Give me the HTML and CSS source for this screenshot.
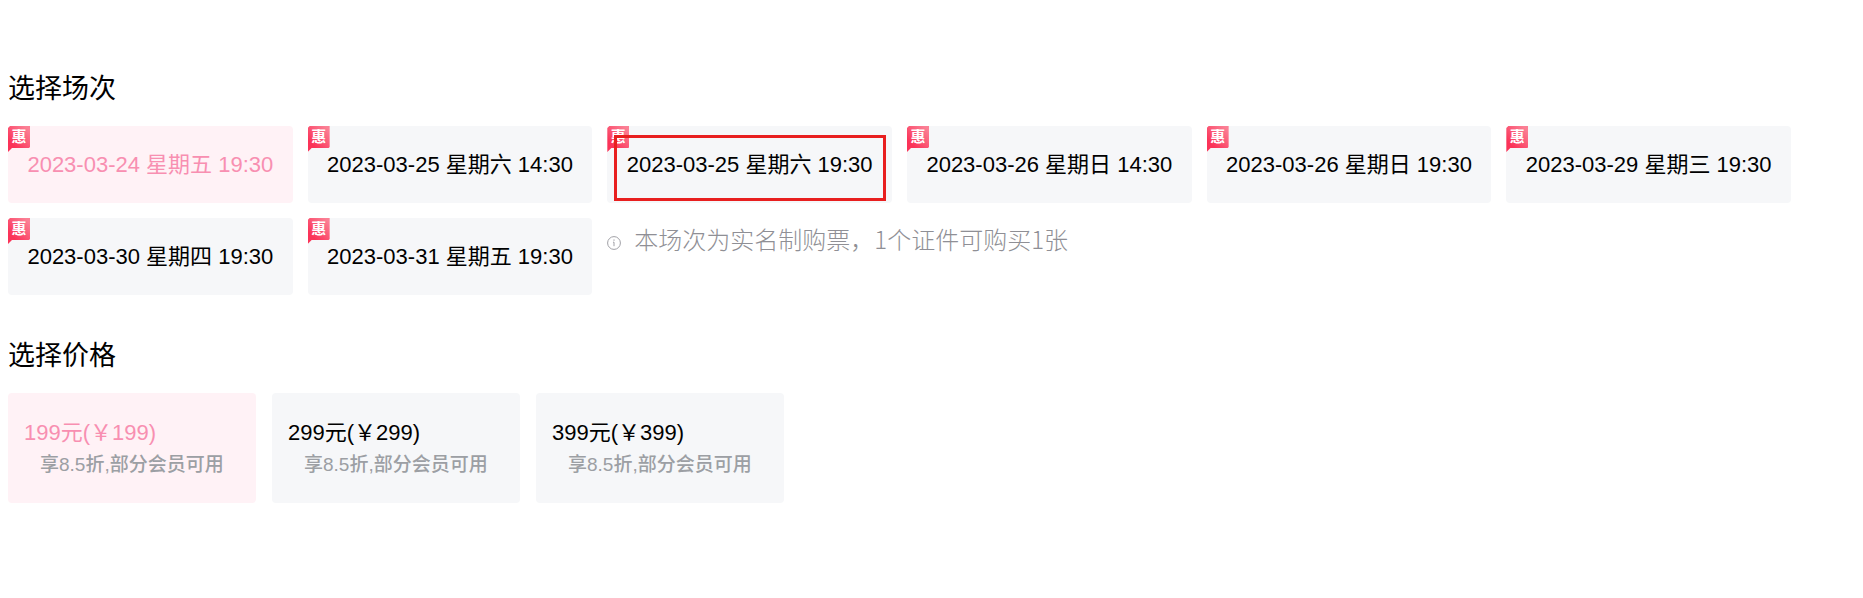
FILE: index.html
```html
<!DOCTYPE html>
<html lang="zh-CN">
<head>
<meta charset="utf-8">
<meta name="viewport" content="width=device-width, initial-scale=1">
<title>选择场次</title>
<link rel="stylesheet" href="styles.css">
</head>
<body>
<main class="page">
  <section class="section">
    <h2 class="title">选择场次</h2>
    <div class="sessions">
      <button class="card session selected" type="button"><span class="badge">惠</span>2023-03-24 星期五 19:30</button>
      <button class="card session" type="button"><span class="badge">惠</span>2023-03-25 星期六 14:30</button>
      <button class="card session" type="button"><span class="badge">惠</span>2023-03-25 星期六 19:30<span class="marker"></span></button>
      <button class="card session" type="button"><span class="badge">惠</span>2023-03-26 星期日 14:30</button>
      <button class="card session" type="button"><span class="badge">惠</span>2023-03-26 星期日 19:30</button>
      <button class="card session" type="button"><span class="badge">惠</span>2023-03-29 星期三 19:30</button>
      <button class="card session" type="button"><span class="badge">惠</span>2023-03-30 星期四 19:30</button>
      <button class="card session" type="button"><span class="badge">惠</span>2023-03-31 星期五 19:30</button>
      <p class="note">
        <svg class="note-icon" viewBox="0 0 14 14" aria-hidden="true"><circle cx="7" cy="7" r="6.4"/><path d="M7 3.4v1.4M6 6.2h1v4"/></svg>
        <span>本场次为实名制购票，1个证件可购买1张</span>
      </p>
    </div>
  </section>
  <section class="section">
    <h2 class="title">选择价格</h2>
    <div class="prices">
      <button class="card price selected" type="button">199元(￥199)<span class="discount">享8.5折,部分会员可用</span></button>
      <button class="card price" type="button">299元(￥299)<span class="discount">享8.5折,部分会员可用</span></button>
      <button class="card price" type="button">399元(￥399)<span class="discount">享8.5折,部分会员可用</span></button>
    </div>
  </section>
</main>
</body>
</html>
```
FILE: styles.css
```css
* {
  box-sizing: border-box;
}

body {
  margin: 0;
  background: #fff;
  color: #000;
  font-family: "Liberation Sans", "Noto Sans CJK SC", sans-serif;
}

.page {
  display: flex;
  flex-direction: column;
  gap: 40px;
  padding: 69px 72px 68px 8px;
}

.title {
  margin: 0 0 17px;
  font-size: 27px;
  font-weight: 400;
  line-height: 40px;
}

.sessions {
  display: grid;
  grid-template-columns: repeat(6, 1fr);
  gap: 15px;
}

.card {
  position: relative;
  border: 0;
  border-radius: 4px;
  background: #f6f7f9;
  color: #000;
  font-family: inherit;
  font-size: 22px;
  line-height: 32px;
  white-space: nowrap;
  cursor: pointer;
}

.selected {
  background: #fff2f6;
  color: #f88fb1;
}

.session {
  padding: 23px 16px 22px;
  text-align: center;
}

.badge {
  position: absolute;
  top: 0;
  left: 0;
  width: 22px;
  height: 26px;
  background: linear-gradient(45deg, #fb3358 25%, #fb8095 90%);
  clip-path: polygon(0 2px, 2px 0, 100% 0, 100% 21px, 21px 22px, 4px 22px, 0 100%);
  color: #fff;
  font-size: 15px;
  font-weight: 700;
  line-height: 22px;
  text-align: center;
}

.marker {
  position: absolute;
  inset: 9px 6px 2px 7px;
  border: 3px solid #e81f1f;
}

.note {
  display: flex;
  grid-column: span 4;
  align-items: center;
  align-self: start;
  gap: 13px;
  margin: 3px 0 0;
  color: #8f8f95;
  font-family: "Noto Sans CJK SC", sans-serif;
  font-size: 24px;
  font-weight: 300;
  line-height: 36px;
}

.note-icon {
  width: 14px;
  height: 14px;
  margin-top: 8px;
  fill: none;
  stroke: #a0a0a6;
  stroke-width: 1;
}

.prices {
  display: flex;
  flex-wrap: wrap;
  gap: 16px;
}

.price {
  width: 248px;
  padding: 24px 16px 22px;
  text-align: left;
}

.section + .section {
  margin-top: 1px;
}

.discount {
  display: block;
  padding-left: 16px;
  color: #9c9fa4;
  font-size: 19px;
  font-weight: 500;
}
```
